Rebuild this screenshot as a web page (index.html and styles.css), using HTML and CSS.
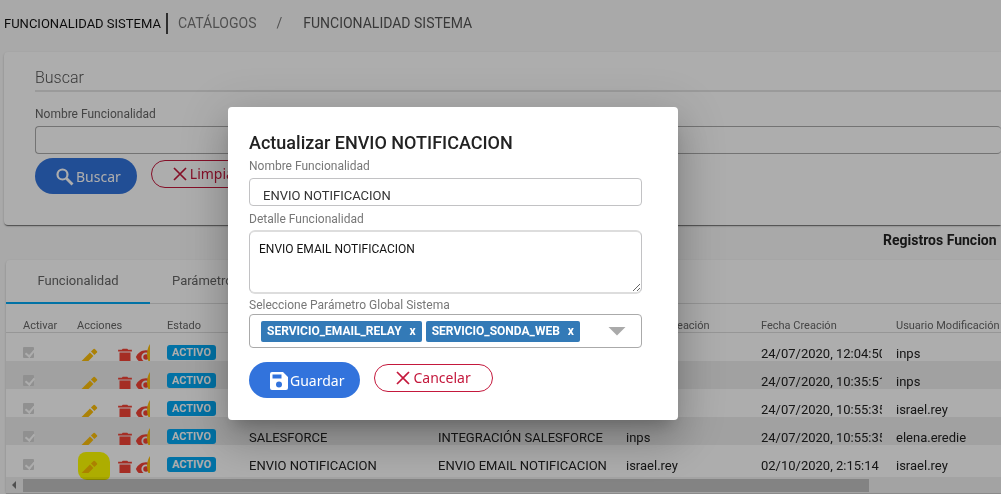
FILE: index.html
```html
<!DOCTYPE html>
<html lang="es">
<head>
<meta charset="utf-8">
<title>Funcionalidad Sistema</title>
<link rel="stylesheet" href="styles.css">
</head>
<body>
<svg class="defs" aria-hidden="true">
  <symbol id="i-edit" viewBox="0 0 24 24"><path d="M3 17.250V21h3.750L16.800 10.950l-3.750-3.750L3 17.250z"/><path d="M20.710 7.040a1 1 0 0 0 0-1.410l-2.340-2.340a1 1 0 0 0-1.410 0l-2.830 2.830 3.750 3.750 2.830-2.830z"/></symbol>
  <symbol id="i-trash" viewBox="0 0 24 24"><path d="M6 19c0 1.100.9 2 2 2h8c1.100 0 2-.9 2-2V7H6v12z"/><path d="M19.500 4H15.500l-1-1h-5l-1 1H4.500v2h15V4z"/></symbol>
  <symbol id="i-eye" viewBox="0 0 24 24"><path fill-rule="evenodd" d="M12 4.500C7 4.500 2.730 7.610 1 12c1.730 4.390 6 7.500 11 7.500s9.270-3.110 11-7.500c-1.730-4.390-6-7.500-11-7.500zM12 17a5 5 0 1 1 0-10 5 5 0 0 1 0 10z"/><circle cx="12" cy="12" r="3"/></symbol>
  <symbol id="i-x" viewBox="0 0 14 14"><path d="M1 1l12 12M13 1L1 13" fill="none" stroke="currentColor" stroke-width="1.700"/></symbol>
</svg>
<div class="page">
  <header class="top">
    <h1>FUNCIONALIDAD SISTEMA</h1>
    <nav class="crumbs"><a href="#">CATÁLOGOS</a><span class="sep">/</span><a href="#" class="current">FUNCIONALIDAD SISTEMA</a></nav>
  </header>
  <section class="card search">
    <h2>Buscar</h2>
    <label for="q">Nombre Funcionalidad</label>
    <input id="q" type="text">
    <div class="actions">
      <button class="btn primary" type="button"><svg class="ic-search" viewBox="0 0 18 18"><circle cx="6.500" cy="6.500" r="5" fill="none" stroke="currentColor" stroke-width="2.200"/><path d="M10.500 10.500l6 6" stroke="currentColor" stroke-width="2.800"/></svg>Buscar</button>
      <button class="btn outline" type="button"><svg class="ic-x"><use href="#i-x"/></svg>Limpiar</button>
    </div>
  </section>
  <h3 class="records">Registros Funcion</h3>
  <section class="card list">
    <div class="tabs"><button type="button" class="tab active">Funcionalidad</button><button type="button" class="tab">Parámetro</button></div>
    <div class="scroller">
      <table>
        <colgroup><col class="c1"><col class="c2"><col class="c3"><col class="c4"><col class="c5"><col class="c6"><col class="c6"><col class="c5"></colgroup>
        <thead><tr><th>Activar</th><th>Acciones</th><th>Estado</th><th></th><th></th><th>Usuario Creación</th><th>Fecha Creación</th><th>Usuario Modificación</th></tr></thead>
        <tbody id="rows"></tbody>
      </table>
    </div>
    <div class="hscroll"><span class="arrow"></span><span class="thumb"></span></div>
  </section>
</div>
<div class="backdrop"></div>
<form class="dialog" role="dialog" aria-labelledby="dt">
  <h2 id="dt">Actualizar ENVIO NOTIFICACION</h2>
  <label for="name">Nombre Funcionalidad</label>
  <input id="name" type="text" value="ENVIO NOTIFICACION">
  <label for="detail">Detalle Funcionalidad</label>
  <textarea id="detail">ENVIO EMAIL NOTIFICACION</textarea>
  <label for="params">Seleccione Parámetro Global Sistema</label>
  <div class="multi">
    <span class="chip">SERVICIO_EMAIL_RELAY<button type="button">x</button></span>
    <span class="chip">SERVICIO_SONDA_WEB<button type="button">x</button></span>
    <button type="button" id="params" class="caret" aria-label="Abrir"></button>
  </div>
  <div class="actions">
    <button class="btn primary" type="button"><svg class="ic-save" viewBox="0 0 18 18"><path fill-rule="evenodd" d="M2 0h11l5 5v11a2 2 0 0 1-2 2H2a2 2 0 0 1-2-2V2a2 2 0 0 1 2-2zM2.500 2.500v4h9v-4zM9 9.500a3 3 0 1 0 0 6 3 3 0 0 0 0-6z"/></svg>Guardar</button>
    <button class="btn outline" type="button"><svg class="ic-x"><use href="#i-x"/></svg>Cancelar</button>
  </div>
</form>
<script src="app.js"></script>
</body>
</html>
```
FILE: styles.css
```css
* { box-sizing: border-box; }
body { margin: 0; background: #fafafa; font-family: Roboto, "Liberation Sans", sans-serif; font-size: 13px; color: #222; overflow: hidden; }
h1, h2, h3 { margin: 0; font-weight: 400; }
a { color: inherit; text-decoration: none; }
button, input, textarea { font: inherit; }
.defs { position: absolute; width: 0; height: 0; }
.page { height: 100vh; overflow: hidden; }
.top { display: flex; align-items: center; height: 52px; padding: 0 0 6px 4px; }
.top h1 { font-size: 13px; line-height: 21px; color: #111; padding-right: 5px; border-right: 2px solid #444; }
.crumbs { display: flex; padding-left: 10px; font-size: 14px; color: #777; }
.crumbs .sep { padding: 0 21px 0 20px; }
.crumbs .current { color: #555; }
.card { background: #fff; border-radius: 4px 0 0 4px; box-shadow: 0 2px 1px -1px rgba(0,0,0,.35), 0 1px 1px rgba(0,0,0,.2), 0 1px 3px rgba(0,0,0,.15); }
.search { margin-left: 4px; padding: 14px 0 31px 31px; }
.search h2 { font-size: 16px; line-height: 24px; border-bottom: 2px solid #e4e4e4; color: #555; font-weight: 300; margin-bottom: 14px; }
label { display: block; font-size: 12px; line-height: 16px; color: #777; }
.search label { color: #666; }
input, textarea { display: block; width: 100%; border: 1px solid #c2c2c4; border-radius: 4px; background: #fff; outline: 0; color: #333; }
.search input { height: 28px; margin: 4px 0; border-color: #aaa; border-right: 0; }
.actions { display: flex; align-items: flex-start; }
.btn { display: flex; align-items: center; justify-content: center; font-family: "Noto Sans", "Open Sans", sans-serif; font-size: 14px; line-height: 20px; cursor: pointer; }
.primary { height: 36px; border: 0; border-radius: 18px; background: #3273dc; color: #fff; padding: 1px 16px 0 21px; }
.outline { height: 28px; border: 1px solid #c4183c; border-radius: 14px; background: transparent; color: #c4183c; padding: 0 21px; margin: 2px 0 0 14px; }
.ic-search { width: 18px; height: 18px; margin-right: 2px; }
.ic-x { width: 14px; height: 14px; margin-right: 3px; }
.ic-save { width: 18px; height: 18px; margin-right: 2px; fill: currentColor; }
.records { font-size: 14px; font-weight: 700; line-height: 20px; padding: 5px 0 10px 883px; white-space: nowrap; color: #222; }
.list { margin-left: 6px; }
.tabs { display: flex; height: 44px; border-bottom: 1px solid #ddd; }
.tab { min-width: 144px; margin-bottom: -1px; padding: 0 22px 2px; border: 0; border-bottom: 2px solid transparent; background: none; font-size: 13px; text-align: left; color: #666; }
.tab.active { border-color: #03a9f4; text-align: center; }
.scroller { overflow-x: clip; overflow-y: visible; padding-bottom: 4px; }
table { width: 1061px; table-layout: fixed; border-collapse: collapse; }
.c1 { width: 54px; } .c2 { width: 90px; } .c3 { width: 82px; } .c4 { width: 189px; } .c5 { width: 188px; } .c6 { width: 135px; }
th { height: 28px; padding: 16px 0 0 17px; border-bottom: 1px solid #ddd; text-align: left; font-weight: 400; font-size: 11px; line-height: 12px; color: #666; white-space: nowrap; }
td { padding: 0 0 0 17px; position: relative; }
td > div { height: 28px; padding-top: 12px; line-height: 18px; overflow: hidden; white-space: nowrap; }
td:nth-child(7) > div { margin-right: -3px; }
tbody tr:nth-child(even) { background: #ededed; }
td input { appearance: none; width: 11px; height: 11px; margin: 2px 0 0; border: 0; border-radius: 1px; background: #d4d4d4; position: relative; }
td input::before { content: ""; position: absolute; left: 4px; top: 1px; width: 4px; height: 7px; border: solid #fff; border-width: 0 2px 2px 0; transform: rotate(40deg); }
.badge { display: block; width: 49px; height: 15px; border-radius: 3px; background: #03a9f4; color: #fff; font-weight: 700; font-size: 11px; line-height: 15px; text-align: center; }
td > .icons { display: flex; padding-top: 13px; position: relative; }
.icons button { border: 0; padding: 0; background: none; flex: none; display: flex; height: 22px; }
.icons svg { width: 22px; height: 22px; fill: currentColor; }
.edit { color: #fdbf0b; margin: 0 14px 0 1px; }
.del { color: #f44336; }
.eye { color: #f44336; margin-left: -1px; }
.ring { position: absolute; left: 70px; top: 3px; width: 36px; height: 36px; background: #fdbf0b; border-radius: 50%; }
.mark { position: absolute; left: 18px; top: 7px; width: 32px; height: 28px; background: #ff0; border-radius: 8px 10px 5px 9px; mix-blend-mode: multiply; }
.hscroll { display: flex; align-items: center; height: 17px; background: #f1f1f1; border-bottom: 1px solid #ccc; }
.arrow { width: 17px; padding-left: 6px; }
.arrow::before { content: ""; display: block; width: 0; border: 4px solid transparent; border-left: 0; border-right-color: #777; }
.thumb { width: 85%; height: 13px; background: #c1c1c1; }
.backdrop { position: fixed; inset: 0; background: rgba(0,0,0,.32); }
.dialog { position: absolute; left: 228px; top: 107px; width: 450px; padding: 24px 36px 22px 21px; background: #fff; border-radius: 4px; box-shadow: 0 11px 15px -7px rgba(0,0,0,.2), 0 24px 38px 3px rgba(0,0,0,.14), 0 9px 46px 8px rgba(0,0,0,.12); }
.dialog h2 { font-size: 18px; font-weight: 500; line-height: 24px; margin-bottom: 3px; }
.dialog > input { height: 28px; margin: 4px 0 5px; padding: 6px 13px 0; }
.dialog textarea { height: 64px; margin: 3px 0; padding: 8px 9px; font-size: 12px; line-height: 18px; border-radius: 6px; border-width: 2px 1px; border-color: #ddd #c2c2c4; color: #111; }
.multi { display: flex; align-items: center; gap: 4px; height: 34px; margin: 1px 0 14px; padding: 0 15px 0 11px; border: 1px solid #aaa; border-radius: 4px; }
.chip { display: flex; align-items: center; height: 21px; padding: 0 6px; background: #337ab7; border-radius: 2px; color: #fff; font-size: 12px; font-weight: 700; }
.chip button { border: 0; padding: 0 0 0 8px; background: none; color: inherit; font-weight: 700; }
.caret { margin-left: auto; padding: 0; width: 18px; height: 9px; border: 0; background: #aaa; clip-path: polygon(0 0, 100% 0, 50% 100%); }
```
FILE: app.js
```js
const rows = [
  ["", "", "", "24/07/2020, 12:04:50", "inps"],
  ["", "", "", "24/07/2020, 10:35:51", "inps"],
  ["", "", "", "24/07/2020, 10:55:35", "israel.rey"],
  ["SALESFORCE", "INTEGRACIÓN SALESFORCE", "inps", "24/07/2020, 10:55:35", "elena.eredie"],
  ["ENVIO NOTIFICACION", "ENVIO EMAIL NOTIFICACION", "israel.rey", "02/10/2020, 2:15:14", "israel.rey"]
];
const icon = (cls, id, label) => `<button type="button" class="${cls}" aria-label="${label}"><svg><use href="#${id}"/></svg></button>`;
document.getElementById("rows").innerHTML = rows.map((r, i) => {
  const last = i === rows.length - 1;
  return `<tr><td><div><input type="checkbox" checked disabled aria-label="Activar"></div></td>
  <td><div class="icons">${icon("edit", "i-edit", "Editar")}${icon("del", "i-trash", "Eliminar")}${icon("eye", "i-eye", "Ver")}<span class="ring"></span></div>${last ? '<span class="mark"></span>' : ""}</td>
  <td><div><span class="badge">ACTIVO</span></div></td>${r.map(t => `<td><div>${t}</div></td>`).join("")}</tr>`;
}).join("");
const input = document.getElementById("name");
input.focus();
input.setSelectionRange(18, 18);
```
